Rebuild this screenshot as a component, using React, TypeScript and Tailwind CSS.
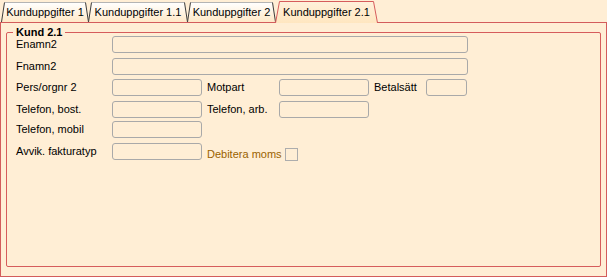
import React from "react";

const PEACH = "#ffeed5";

interface TabProps {
  label: string;
  width: number;
  active?: boolean;
}

const Tab: React.FC<TabProps> = ({ label, width, active }) => {
  const h = active ? 22 : 20;
  const s = active ? 4 : 3;
  const id = `tabfill-${label.replace(/[^a-z0-9]/gi, "")}`;
  return (
    <div
      className={`relative flex items-center justify-center shrink-0 -ml-px first:ml-px ${
        active ? "h-[22px] -mb-px z-10" : "h-[20px]"
      }`}
      style={{ width }}
    >
      {/* tab shape */}
      <svg
        className="absolute left-0 top-0"
        width={width}
        height={h}
        viewBox={`0 0 ${width} ${h}`}
      >
        <defs>
          <linearGradient id={id} x1="0" y1="0" x2="0" y2="1">
            <stop offset="0" stopColor={active ? "#fff1db" : "#ffffff"} />
            <stop offset="1" stopColor={active ? "#ffe6c0" : "#ffe9c8"} />
          </linearGradient>
        </defs>
        <path
          d={`M0.5,${h} L${s + 0.5},0.5 L${width - s - 0.5},0.5 L${width - 0.5},${h} Z`}
          fill={`url(#${id})`}
        />
        <path
          d={`M${s + 0.5},0.5 L${width - s - 0.5},0.5`}
          stroke={active ? "#d65c5c" : "#b4b4b4"}
          strokeWidth="1"
          fill="none"
        />
        <path
          d={`M0.5,${h} L${s + 0.5},0.5 M${width - s - 0.5},0.5 L${width - 0.5},${h}`}
          stroke={active ? "#d65c5c" : "#3c3c3c"}
          strokeWidth="1"
          fill="none"
        />
      </svg>
      <span className="relative leading-[13px] text-black">{label}</span>
    </div>
  );
};

const Field: React.FC<{ w: string }> = ({ w }) => (
  <input
    className={`h-[17px] ${w} shrink-0 rounded-[3px] border border-[#a9a9a9] bg-transparent outline-none`}
  />
);

export default function App() {
  return (
    <div
      className="w-[607px] h-[277px] overflow-hidden font-['Liberation_Sans',Arial,sans-serif] text-[11px] text-black"
      style={{ background: PEACH }}
    >
      {/* Tab strip */}
      <div className="relative z-10 flex items-end h-[22px]">
        <Tab label="Kunduppgifter 1" width={88} />
        <Tab label="Kunduppgifter 1.1" width={100} />
        <Tab label="Kunduppgifter 2" width={89} />
        <Tab label="Kunduppgifter 2.1" width={103} active />
      </div>

      {/* Panel */}
      <div className="h-[255px] flex flex-col border border-[#d35c5c] px-[5px] pb-[9px] bg-[#ffeed5]">
        <fieldset className="mt-[3px] flex-1 rounded-[2px] border border-[#d65c5c] pl-[9px]">
          <legend className="ml-[-3px] px-[3px] font-bold leading-[12px]">Kund 2.1</legend>

          <div className="flex flex-col">
            <div className="flex items-center h-[17px] -mt-[2px]">
              <span className="w-[96px] shrink-0">Enamn2</span>
              <Field w="w-[356px]" />
            </div>
            <div className="flex items-center h-[17px] mt-[5px]">
              <span className="w-[96px] shrink-0">Fnamn2</span>
              <Field w="w-[356px]" />
            </div>
            <div className="flex items-center h-[17px] mt-[4px]">
              <span className="w-[96px] shrink-0">Pers/orgnr 2</span>
              <Field w="w-[90px]" />
              <span className="ml-[5px] w-[72px] shrink-0">Motpart</span>
              <Field w="w-[90px]" />
              <span className="ml-[5px] w-[52px] shrink-0">Betalsätt</span>
              <Field w="w-[41px]" />
            </div>
            <div className="flex items-center h-[17px] mt-[5px]">
              <span className="w-[96px] shrink-0">Telefon, bost.</span>
              <Field w="w-[90px]" />
              <span className="ml-[5px] w-[72px] shrink-0">Telefon, arb.</span>
              <Field w="w-[90px]" />
            </div>
            <div className="flex items-center h-[17px] mt-[3px]">
              <span className="w-[96px] shrink-0">Telefon, mobil</span>
              <Field w="w-[90px]" />
            </div>
            <div className="flex items-center h-[17px] mt-[5px]">
              <span className="w-[96px] shrink-0">Avvik. fakturatyp</span>
              <Field w="w-[90px]" />
              <div className="ml-[5px] mt-[5px] flex items-center">
                <span className="w-[78px] shrink-0 text-[#9a6200]">Debitera moms</span>
                <input
                  type="checkbox"
                  className="appearance-none w-[13px] h-[13px] border border-[#adadad] bg-transparent"
                />
              </div>
            </div>
          </div>
        </fieldset>
      </div>
    </div>
  );
}
